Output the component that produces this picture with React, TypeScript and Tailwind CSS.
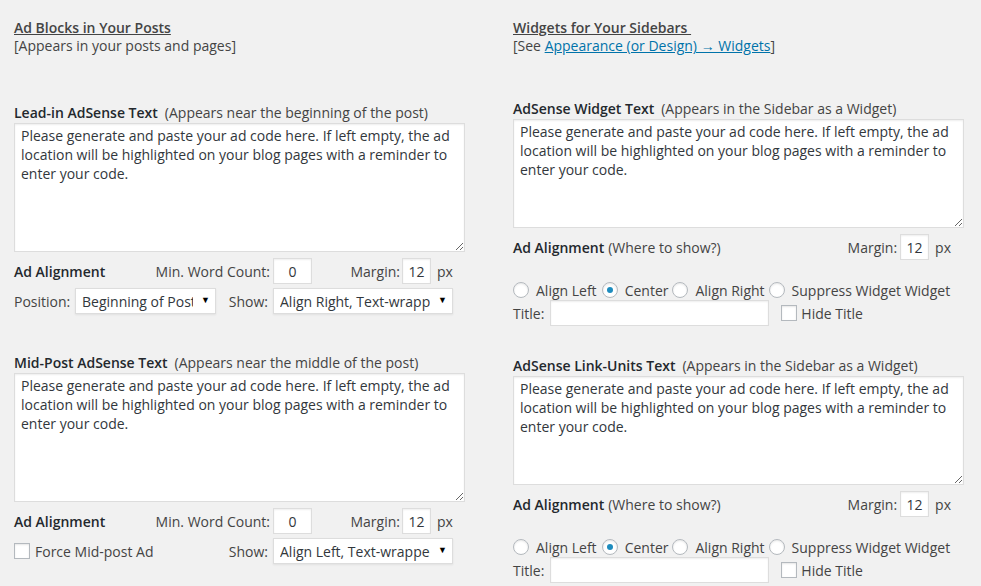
import React from 'react';

const AD_TEXT =
  'Please generate and paste your ad code here. If left empty, the ad location will be highlighted on your blog pages with a reminder to enter your code.';

const inputCls =
  'h-[26px] bg-white border border-[#dddddd] shadow-[inset_0_1px_2px_rgba(0,0,0,0.07)] text-[14px] text-[#32373c] text-center outline-none';

const AdTextarea: React.FC<{ tall?: boolean }> = ({ tall }) => (
  <textarea
    defaultValue={AD_TEXT}
    className={`block w-[451px] ${tall ? 'h-[129px]' : 'h-[109px]'} bg-white border border-[#dddddd] shadow-[inset_0_1px_2px_rgba(0,0,0,0.07)] px-[6px] py-[2px] text-[14px] leading-[19px] text-[#32373c] outline-none resize`}
  />
);

const Select: React.FC<{ value: string; width: string }> = ({ value, width }) => (
  <div className={`relative ${width} h-[26px]`}>
    <select
      defaultValue={value}
      className="appearance-none w-full h-full bg-white border border-[#dddddd] shadow-[0_1px_2px_rgba(0,0,0,0.07)] pl-[6px] pr-[22px] text-[14px] text-[#32373c] outline-none"
    >
      <option>{value}</option>
    </select>
    <span className="pointer-events-none absolute right-[6px] top-[5px] text-[9px] text-black">▼</span>
  </div>
);

const Label: React.FC<{ title: string; note: string }> = ({ title, note }) => (
  <div className="h-[20px] leading-[20px] flex">
    <span className="font-semibold text-[#23282d]">{title}</span>
    <span className="ml-[7px]">{note}</span>
  </div>
);

const Radio: React.FC<{ checked?: boolean }> = ({ checked }) => (
  <span className="w-4 h-4 rounded-full border border-[#b4b9be] bg-white shadow-[inset_0_1px_2px_rgba(0,0,0,0.1)] flex items-center justify-center shrink-0">
    {checked && <span className="w-[6px] h-[6px] rounded-full bg-[#1e8cbe]" />}
  </span>
);

const Checkbox: React.FC = () => (
  <span className="w-4 h-4 border border-[#b4b9be] bg-white shadow-[inset_0_1px_2px_rgba(0,0,0,0.1)] shrink-0" />
);

const PostAlignRow: React.FC = () => (
  <div className="mt-[6px] h-[26px] flex items-center">
    <div className="w-[256px] flex justify-between">
      <span className="font-semibold text-[#23282d]">Ad Alignment</span>
      <span>Min. Word Count:</span>
    </div>
    <input defaultValue="0" className={`${inputCls} ml-[3px] w-[39px]`} />
    <span className="w-[88px] text-right">Margin:</span>
    <input defaultValue="12" className={`${inputCls} ml-[2px] w-[29px]`} />
    <span className="ml-[6px]">px</span>
  </div>
);

const WidgetBlock: React.FC<{ title: string; first?: boolean }> = ({ title, first }) => (
  <div className={first ? 'mt-[44px]' : 'mt-[30px]'}>
    <Label title={title} note="(Appears in the Sidebar as a Widget)" />
    <AdTextarea />
    <div className="mt-[6px] h-[26px] flex items-center w-[438px]">
      <span className="font-semibold text-[#23282d]">Ad Alignment</span>
      <span className="ml-[4px]">(Where to show?)</span>
      <span className="ml-auto">Margin:</span>
      <input defaultValue="12" className={`${inputCls} ml-[3px] w-[29px]`} />
      <span className="ml-[6px]">px</span>
    </div>
    <div className="mt-[20px] h-[20px] flex items-center">
      <Radio />
      <span className="ml-[7px]">Align Left</span>
      <span className="ml-[5px]"><Radio checked /></span>
      <span className="ml-[7px]">Center</span>
      <span className="ml-[4px]"><Radio /></span>
      <span className="ml-[7px]">Align Right</span>
      <span className="ml-[4px]"><Radio /></span>
      <span className="ml-[7px]">Suppress Widget Widget</span>
    </div>
    <div className="h-[26px] flex items-center">
      <span>Title:</span>
      <input className={`${inputCls} ml-[6px] w-[219px] text-left px-2`} />
      <span className="ml-[12px] flex"><Checkbox /></span>
      <span className="ml-[4px]">Hide Title</span>
    </div>
  </div>
);

export default function App() {
  return (
    <div
      className="w-[981px] h-[586px] overflow-hidden bg-[#f1f1f1] text-[14px] text-[#444444] flex pl-[14px] pt-[19px]"
      style={{ fontFamily: '"Open Sans", "Noto Sans", sans-serif' }}
    >
      <div className="w-[451px] shrink-0">
        <div className="leading-[18px] font-semibold underline text-[#444444]">Ad Blocks in Your Posts</div>
        <div className="leading-[18px]">[Appears in your posts and pages]</div>

        <div className="mt-[48px]">
          <Label title="Lead-in AdSense Text" note="(Appears near the beginning of the post)" />
          <AdTextarea tall />
          <PostAlignRow />
          <div className="mt-[4px] h-[26px] flex items-center">
            <span className="w-[61px]">Position:</span>
            <Select value="Beginning of Post" width="w-[141px]" />
            <span className="w-[52px] text-right">Show:</span>
            <span className="ml-[5px]">
              <Select value="Align Right, Text-wrapped" width="w-[180px]" />
            </span>
          </div>
        </div>

        <div className="mt-[39px]">
          <Label title="Mid-Post AdSense Text" note="(Appears near the middle of the post)" />
          <AdTextarea tall />
          <PostAlignRow />
          <div className="mt-[4px] h-[26px] flex items-center">
            <div className="w-[254px] flex items-center">
              <Checkbox />
              <span className="ml-[5px]">Force Mid-post Ad</span>
              <span className="ml-auto">Show:</span>
            </div>
            <span className="ml-[5px]">
              <Select value="Align Left, Text-wrapped" width="w-[180px]" />
            </span>
          </div>
        </div>
      </div>

      <div className="w-[451px] shrink-0 ml-[48px]">
        <div className="leading-[18px] font-semibold underline text-[#444444] whitespace-pre">Widgets for Your Sidebars </div>
        <div className="leading-[18px]">
          [See{' '}
          <a href="#" className="text-[#0073aa] underline">
            Appearance (or Design) → Widgets
          </a>
          ]
        </div>
        <WidgetBlock title="AdSense Widget Text" first />
        <WidgetBlock title="AdSense Link-Units Text" />
      </div>
    </div>
  );
}
